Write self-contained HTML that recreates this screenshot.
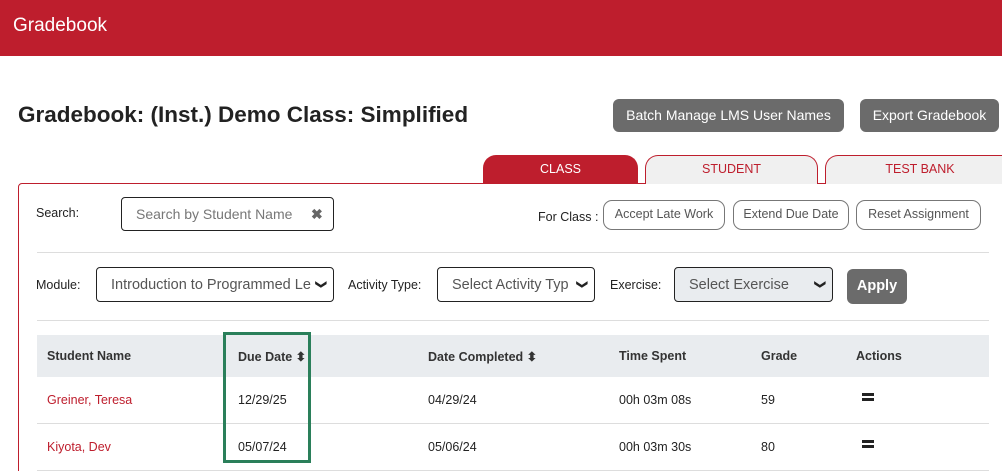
<!DOCTYPE html>
<html><head><style>
*{box-sizing:border-box;margin:0;padding:0}
html,body{width:1002px;height:471px;overflow:hidden}
body{background:#fff;font-family:"Liberation Sans",sans-serif;position:relative;color:#222}
.a{position:absolute}
.hdr{left:0;top:0;width:1002px;height:56px;background:#be1e2d;color:#fff;font-size:19px;padding:16px 13px;line-height:20px}
h1{position:absolute;left:18px;top:102px;font-size:22.5px;font-weight:bold;color:#222;white-space:nowrap}
.gb{background:#6b6b6b;color:#fff;font-size:14px;border-radius:6px;text-align:center;line-height:33px}
.tab{top:155px;height:29px;border:1px solid #be1e2d;border-bottom:none;border-radius:13px 13px 0 0;background:#f0f0f0;color:#be1e2d;font-size:12.5px;text-align:center;line-height:27px}
.panel{left:18px;top:183px;width:1000px;height:300px;border:1px solid #be1e2d;border-radius:4px 0 0 0}
.lbl{font-size:12.5px;color:#222}
.box{border:1px solid #222;border-radius:4px;font-size:14.5px;color:#555;padding-left:14px}
.ob{border:1px solid #777;border-radius:9px;font-size:12.5px;color:#555;text-align:center;line-height:27px}
.hr{height:1px;background:#ddd;left:37px;width:952px}
.chev{position:absolute;right:8px;top:0;font-size:11px;line-height:33px;color:#222;font-weight:bold;transform:rotate(90deg)}
.th{font-size:12.5px;font-weight:bold;color:#333}
.td{font-size:12.5px;color:#222}
.red{color:#be1e2d}
.ham{width:12px;height:8px;border-top:3px solid #222;border-bottom:3px solid #222}
</style></head><body>
<div class="a hdr">Gradebook</div>
<h1>Gradebook: (Inst.) Demo Class: Simplified</h1>
<div class="a gb" style="left:613px;top:99px;width:231px;height:33px">Batch Manage LMS User Names</div>
<div class="a gb" style="left:860px;top:99px;width:139px;height:33px">Export Gradebook</div>
<div class="a panel"></div>
<div class="a tab" style="left:483px;width:155px;background:#be1e2d;color:#fff">CLASS</div>
<div class="a tab" style="left:645px;width:173px">STUDENT</div>
<div class="a tab" style="left:825px;width:190px">TEST BANK</div>
<div class="a lbl" style="left:36px;top:206px">Search:</div>
<div class="a box" style="left:121px;top:197px;width:213px;height:34px;line-height:33px;color:#777;font-size:14px">Search by Student Name<span style="position:absolute;left:189px;color:#666;font-weight:bold">✖</span></div>
<div class="a lbl" style="left:538px;top:210px">For Class :</div>
<div class="a ob" style="left:603px;top:200px;width:122px;height:30px">Accept Late Work</div>
<div class="a ob" style="left:733px;top:200px;width:116px;height:30px">Extend Due Date</div>
<div class="a ob" style="left:856px;top:200px;width:125px;height:30px">Reset Assignment</div>
<div class="a hr" style="top:252px"></div>
<div class="a lbl" style="left:36px;top:278px">Module:</div>
<div class="a box" style="left:96px;top:267px;width:238px;height:35px;line-height:35px;white-space:nowrap;overflow:hidden;padding-right:30px">Introduction to Programmed Le<span class="chev">&#10095;</span></div>
<div class="a lbl" style="left:348px;top:278px">Activity Type:</div>
<div class="a box" style="left:437px;top:267px;width:158px;height:35px;line-height:35px;white-space:nowrap;overflow:hidden">Select Activity Typ<span class="chev">&#10095;</span></div>
<div class="a lbl" style="left:610px;top:278px">Exercise:</div>
<div class="a box" style="left:674px;top:267px;width:159px;height:35px;line-height:35px;background:#e9ecef">Select Exercise<span class="chev">&#10095;</span></div>
<div class="a gb" style="left:847px;top:269px;width:60px;height:35px;line-height:35px;font-size:14.5px;font-weight:bold">Apply</div>
<div class="a hr" style="top:320px"></div>
<div class="a" style="left:37px;top:335px;width:952px;height:42px;background:#e9ecef"></div>
<div class="a hr" style="top:423px"></div>
<div class="a hr" style="top:470px"></div>
<div class="a th" style="left:47px;top:349px">Student Name</div>
<div class="a th" style="left:238px;top:349px">Due Date ⬍</div>
<div class="a th" style="left:428px;top:349px">Date Completed ⬍</div>
<div class="a th" style="left:619px;top:349px">Time Spent</div>
<div class="a th" style="left:761px;top:349px">Grade</div>
<div class="a th" style="left:856px;top:349px">Actions</div>
<div class="a td red" style="left:47px;top:393px">Greiner, Teresa</div>
<div class="a td" style="left:238px;top:393px">12/29/25</div>
<div class="a td" style="left:428px;top:393px">04/29/24</div>
<div class="a td" style="left:619px;top:393px">00h 03m 08s</div>
<div class="a td" style="left:761px;top:393px">59</div>
<div class="a ham" style="left:862px;top:393px"></div>
<div class="a td red" style="left:47px;top:440px">Kiyota, Dev</div>
<div class="a td" style="left:238px;top:440px">05/07/24</div>
<div class="a td" style="left:428px;top:440px">05/06/24</div>
<div class="a td" style="left:619px;top:440px">00h 03m 30s</div>
<div class="a td" style="left:761px;top:440px">80</div>
<div class="a ham" style="left:862px;top:440px"></div>
<div class="a" style="left:223px;top:332px;width:88px;height:131px;border:3px solid #2a7f5a"></div>
</body></html>
